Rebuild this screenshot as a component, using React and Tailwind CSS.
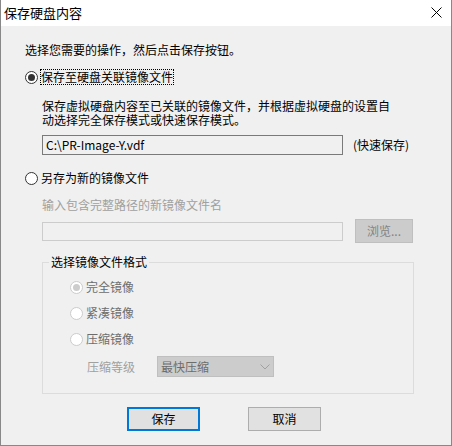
import React from 'react'

const font = "font-['Noto_Sans_CJK_SC','Noto_Sans',sans-serif]"

function Radio({ checked, disabled }) {
  return (
    <span
      className={`w-[13px] h-[13px] rounded-full border flex items-center justify-center flex-shrink-0 bg-white ${
        disabled ? 'border-[#cccccc]' : 'border-[#333333]'
      }`}
    >
      {checked && (
        <span className={`w-[7px] h-[7px] rounded-full ${disabled ? 'bg-[#cccccc]' : 'bg-[#333333]'}`} />
      )}
    </span>
  )
}

function Option({ label, checked, disabled, focused, className = '' }) {
  return (
    <div className={`flex items-center h-4 ${className}`}>
      <Radio checked={checked} disabled={disabled} />
      <span
        className={`leading-[14px] ${focused ? 'ml-[2px] border border-dotted border-black' : 'ml-[3px]'} ${
          disabled ? 'text-[#6d6d6d]' : 'text-black'
        }`}
      >
        {label}
      </span>
    </div>
  )
}

export default function App() {
  return (
    <div className={`w-[452px] h-[446px] flex flex-col border-x border-b border-[#888888] bg-[#f0f0f0] text-[12px] ${font}`}>
      {/* title bar */}
      <div className="h-[26px] bg-white flex items-center justify-between pl-[3px] pr-[9px]">
        <span className="text-[13px] leading-4 text-black">保存硬盘内容</span>
        <svg width="11" height="11" viewBox="0 0 11 11" className="mb-[1px]">
          <path d="M0.5 0.5L10.5 10.5M10.5 0.5L0.5 10.5" stroke="#000" strokeWidth="1" />
        </svg>
      </div>

      <div className="flex flex-col pl-[24px]">
        <p className="mt-[16px] leading-4 text-black">选择您需要的操作，然后点击保存按钮。</p>

        <Option className="mt-[11px]" label="保存至硬盘关联镜像文件" checked focused />

        <div className="mt-[14px] ml-[17px] flex flex-col text-black">
          <p className="h-[14px] leading-[14px]">保存虚拟硬盘内容至已关联的镜像文件，并根据虚拟硬盘的设置自</p>
          <p className="h-[14px] leading-[14px]">动选择完全保存模式或快速保存模式。</p>
        </div>

        <div className="mt-[8px] ml-[17px] flex items-center">
          <div className="w-[301px] h-[20px] border border-[#7a7a7a] bg-[#f0f0f0] flex items-center pl-[3px] text-black leading-4">
            C:\PR-Image-Y.vdf
          </div>
          <span className="ml-[10px] text-black leading-4">(快速保存)</span>
        </div>

        <Option className="mt-[15px]" label="另存为新的镜像文件" />

        <p className="mt-[11px] ml-[17px] leading-4 text-[#a0a0a0]">输入包含完整路径的新镜像文件名</p>

        <div className="mt-[6px] ml-[17px] flex items-center">
          <div className="w-[301px] h-[19px] border border-[#cccccc] bg-[#f0f0f0]" />
          <div className="ml-[12px] w-[58px] h-[24px] bg-[#cccccc] border border-[#bfbfbf] flex items-center justify-center text-[#838383] leading-4">
            浏览...
          </div>
        </div>

        <fieldset className="mt-[11px] ml-[17px] w-[372px] h-[140px] border border-[#dcdcdc] px-0 pb-0">
          <legend className="ml-[6px] px-[2px] leading-4 text-black">选择镜像文件格式</legend>
          <div className="flex flex-col pl-[27px]">
            <Option className="mt-[9px]" label="完全镜像" checked disabled />
            <Option className="mt-[10px]" label="紧凑镜像" disabled />
            <Option className="mt-[10px]" label="压缩镜像" disabled />
            <div className="mt-[9px] flex items-center">
              <span className="ml-[17px] leading-4 text-[#a0a0a0]">压缩等级</span>
              <div className="ml-[22px] w-[117px] h-[21px] bg-[#cccccc] border border-[#bfbfbf] flex items-center justify-between pl-[3px] pr-[3px]">
                <span className="leading-4 text-[#6d6d6d]">最快压缩</span>
                <svg width="10" height="6" viewBox="0 0 10 6">
                  <path d="M0.5 0.5L5 5L9.5 0.5" fill="none" stroke="#a0a0a0" strokeWidth="1" />
                </svg>
              </div>
            </div>
          </div>
        </fieldset>

        <div className="mt-[13px] flex items-center pl-[102px]">
          <button className="w-[73px] h-[24px] border-2 border-[#0078d7] bg-[#e1e1e1] text-black leading-4">保存</button>
          <button className="ml-[48px] w-[73px] h-[24px] border border-[#adadad] bg-[#e1e1e1] text-black leading-4">取消</button>
        </div>
      </div>
    </div>
  )
}
